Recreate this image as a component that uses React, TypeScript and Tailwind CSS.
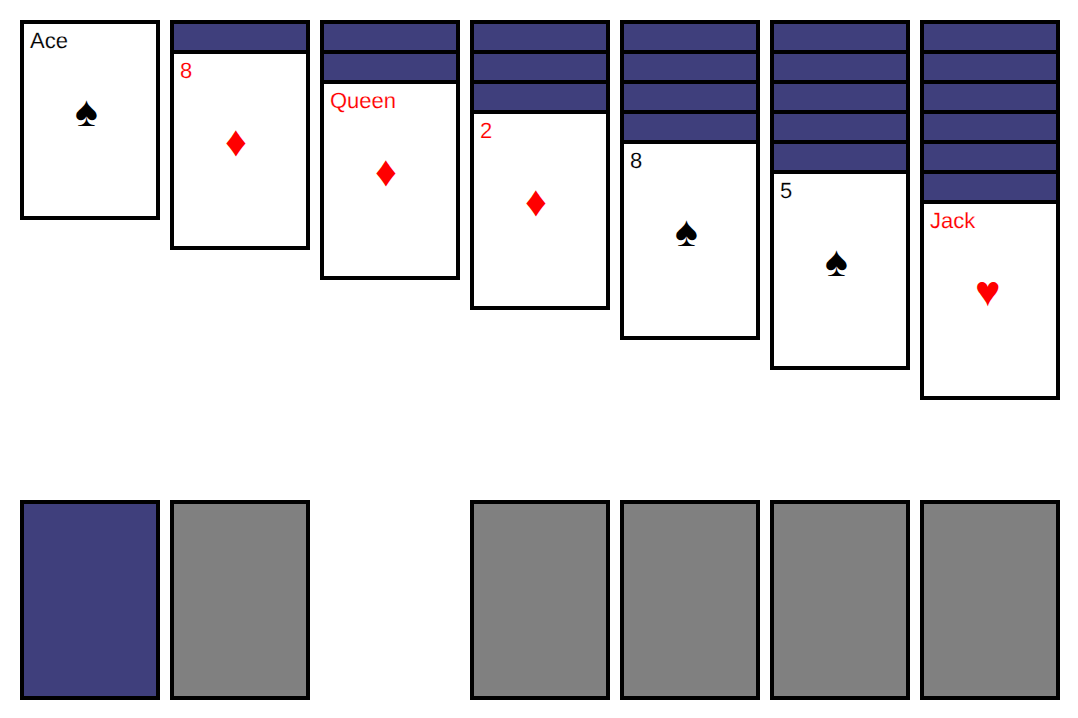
const SPADE = "♠";
const DIAMOND = "♦";
const HEART = "♥";

function Card({ label, suit, red }: { label: string; suit: string; red?: boolean }) {
  return (
    <div className={`h-[200px] w-[140px] shrink-0 border-4 border-black bg-white font-['Liberation_Sans',sans-serif] [text-rendering:geometricPrecision] ${red ? "text-[#ff0000]" : "text-black"}`}>
      <div className="pl-[6px] pt-[3px] text-[22px] leading-[28px] [-webkit-text-stroke:0.15px_white]">{label}</div>
      <div className="mt-[31px] pl-[51px] text-[43px] leading-[52px]">{suit}</div>
    </div>
  );
}

function Column({ backs, label, suit, red }: { backs: number; label: string; suit: string; red?: boolean }) {
  return (
    <div className="flex shrink-0 flex-col">
      {Array.from({ length: backs }, (_, i) => (
        <div key={i} className="h-[30px] w-[140px] border-4 border-b-0 border-black bg-[#3f3f7c]" />
      ))}
      <Card label={label} suit={suit} red={red} />
    </div>
  );
}

export default function App() {
  return (
    <div className="h-[718px] overflow-hidden bg-white p-5">
      <div className="flex items-start gap-[10px]">
        <Column backs={0} label="Ace" suit={SPADE} />
        <Column backs={1} label="8" suit={DIAMOND} red />
        <Column backs={2} label="Queen" suit={DIAMOND} red />
        <Column backs={3} label="2" suit={DIAMOND} red />
        <Column backs={4} label="8" suit={SPADE} />
        <Column backs={5} label="5" suit={SPADE} />
        <Column backs={6} label="Jack" suit={HEART} red />
      </div>
      <div className="mt-[100px] flex gap-[10px]">
        <div className="h-[200px] w-[140px] shrink-0 border-4 border-black bg-[#3f3f7c]" />
        <div className="h-[200px] w-[140px] shrink-0 border-4 border-black bg-[#808080]" />
        <div className="h-[200px] w-[140px] shrink-0" />
        <div className="h-[200px] w-[140px] shrink-0 border-4 border-black bg-[#808080]" />
        <div className="h-[200px] w-[140px] shrink-0 border-4 border-black bg-[#808080]" />
        <div className="h-[200px] w-[140px] shrink-0 border-4 border-black bg-[#808080]" />
        <div className="h-[200px] w-[140px] shrink-0 border-4 border-black bg-[#808080]" />
      </div>
    </div>
  );
}
